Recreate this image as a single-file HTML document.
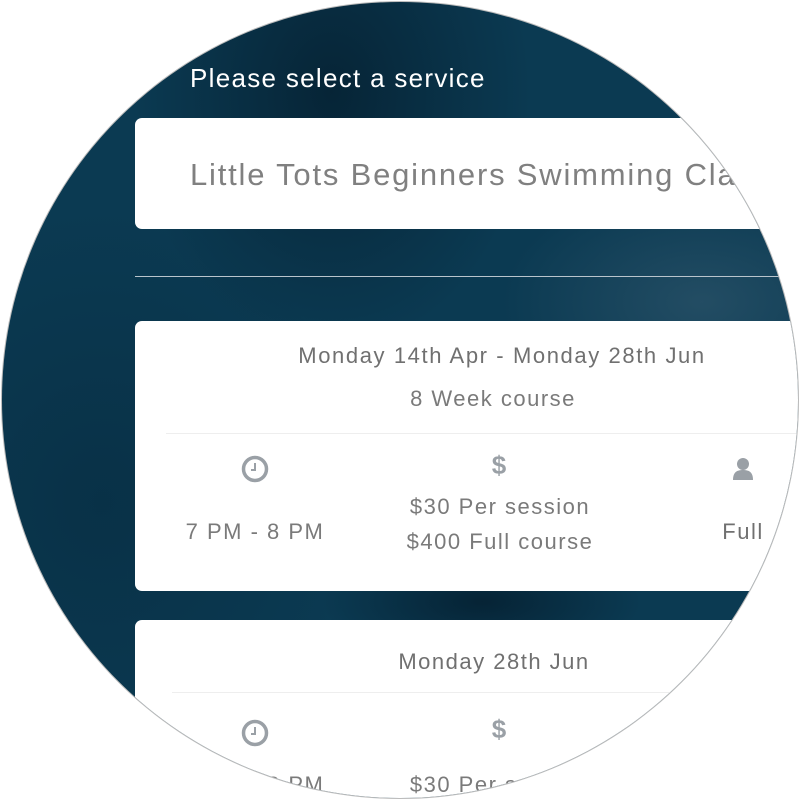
<!DOCTYPE html>
<html><head><style>
html,body{margin:0;padding:0;background:#fff;width:800px;height:800px;overflow:hidden}
.circ{position:absolute;left:2px;top:2px;width:796px;height:796px;border-radius:50%;overflow:hidden;
background:
radial-gradient(ellipse 200px 260px at 330px 90px,rgba(3,22,36,.6),transparent),
radial-gradient(ellipse 200px 120px at 700px 300px,rgba(90,120,140,.3),transparent),
radial-gradient(ellipse 160px 60px at 480px 600px,rgba(2,20,34,.6),transparent),
radial-gradient(ellipse 260px 300px at 100px 500px,rgba(6,40,60,.5),transparent),
#0b3a52;box-shadow:0 0 0 1px #bbb}
.abs{position:absolute}
.t{font-family:"Liberation Sans",sans-serif;color:#7a7a7a;white-space:nowrap;letter-spacing:1.5px}
.card{position:absolute;background:#fff;border-radius:7px;left:133px;width:700px}
.c{text-align:center;transform:translateX(-50%)}
</style></head><body>
<div class="circ">
<div class="abs t" style="left:188px;top:61px;font-size:26px;color:#fff;letter-spacing:1.3px">Please select a service</div>
<div class="card" style="top:116px;height:111px"></div>
<div class="abs t" style="left:188px;top:155px;font-size:31px;color:#808080;letter-spacing:1.8px">Little Tots Beginners Swimming Class</div>
<div class="abs" style="left:133px;top:274px;width:700px;height:1px;background:#b9c4cc"></div>
<div class="card" style="top:319px;height:270px"></div>
<div class="abs t c" style="left:500px;top:341px;font-size:22px;color:#707070;letter-spacing:1.6px">Monday 14th Apr - Monday 28th Jun</div>
<div class="abs t c" style="left:491px;top:384px;font-size:22px">8 Week course</div>
<div class="abs" style="left:164px;top:431px;width:700px;height:1px;background:#eee"></div>
<svg class="abs" style="left:238px;top:452px" width="30" height="30" viewBox="0 0 30 30"><circle cx="15" cy="15" r="11.5" fill="none" stroke="#9aa0a6" stroke-width="3.5"/><path d="M15 9v7h-4" fill="none" stroke="#9aa0a6" stroke-width="2"/></svg>
<div class="abs t c" style="left:497px;top:448px;font-size:26px;font-weight:bold;color:#9aa0a6;letter-spacing:0">$</div>
<svg class="abs" style="left:729px;top:454px" width="24" height="26" viewBox="0 0 24 26"><circle cx="12" cy="8" r="6" fill="#9aa0a6"/><path d="M2 24c0-8 4-10 10-10s10 2 10 10z" fill="#9aa0a6"/></svg>
<div class="abs t c" style="left:253px;top:517px;font-size:22px">7 PM - 8 PM</div>
<div class="abs t c" style="left:498px;top:492px;font-size:22px">$30 Per session</div>
<div class="abs t c" style="left:498px;top:527px;font-size:22px">$400 Full course</div>
<div class="abs t c" style="left:741px;top:517px;font-size:22px;color:#707070">Full</div>
<div class="card" style="top:618px;height:180px"></div>
<div class="abs t c" style="left:492px;top:647px;font-size:22px;color:#707070">Monday 28th Jun</div>
<div class="abs" style="left:170px;top:690px;width:700px;height:1px;background:#eee"></div>
<svg class="abs" style="left:238px;top:716px" width="30" height="30" viewBox="0 0 30 30"><circle cx="15" cy="15" r="11.5" fill="none" stroke="#9aa0a6" stroke-width="3.5"/><path d="M15 9v7h-4" fill="none" stroke="#9aa0a6" stroke-width="2"/></svg>
<div class="abs t c" style="left:497px;top:712px;font-size:26px;font-weight:bold;color:#9aa0a6;letter-spacing:0">$</div>
<div class="abs t c" style="left:253px;top:770px;font-size:22px">7 PM - 8 PM</div>
<div class="abs t c" style="left:498px;top:770px;font-size:22px">$30 Per session</div>
</div>
</body></html>
